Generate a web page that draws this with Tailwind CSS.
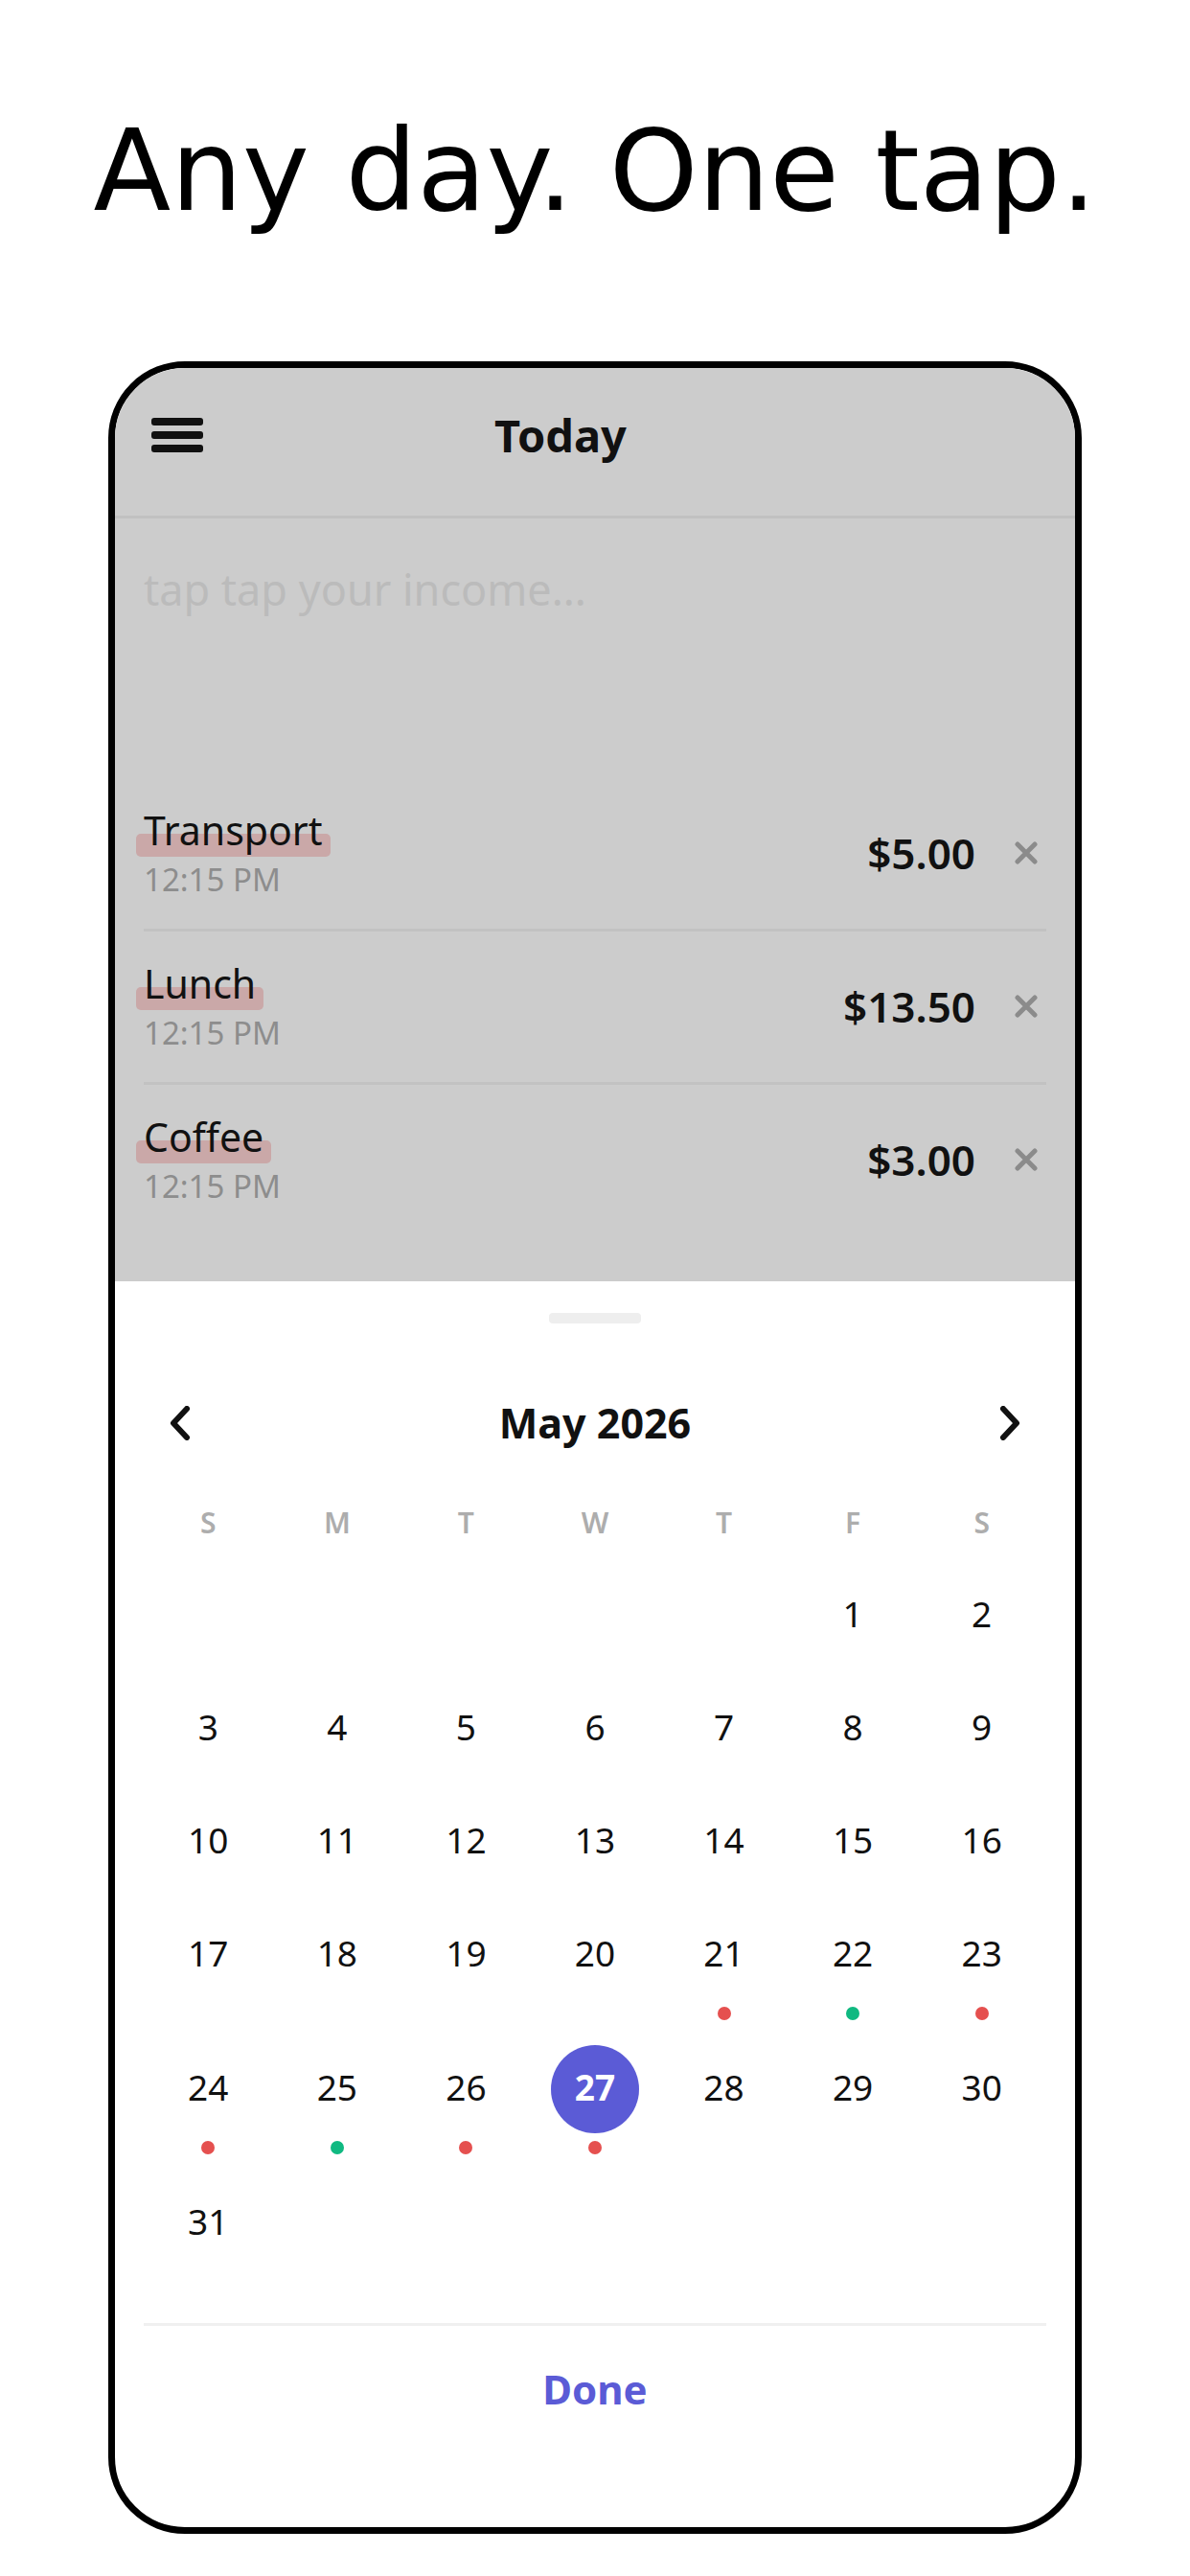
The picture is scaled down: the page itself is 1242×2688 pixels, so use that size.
<!DOCTYPE html>
<html lang="en">
<head>
  <meta charset="UTF-8" />
  <meta name="viewport" content="width=device-width, initial-scale=1.0"/>
  <title>Any day. One tap.</title>
  <script src="https://cdn.jsdelivr.net/npm/@tailwindcss/browser@4"></script>
</head>
<body class="bg-white min-h-screen font-['Noto_Sans','Open_Sans',sans-serif] text-[#111111]">

  <h1 class="pt-[118px] text-center whitespace-nowrap font-['DejaVu_Sans',sans-serif] text-[118px] leading-[120px] text-black">Any day. One tap.</h1>

  <!-- Phone frame -->
  <main class="mx-[113px] mt-[139px] mb-10 overflow-hidden rounded-[80px] border-[7px] border-black bg-white">

    <!-- Dimmed day view -->
    <div class="bg-[#cccccc] pb-[45px]">
      <header class="flex items-center border-b-[3px] border-[#c1c1c1] px-[38px] pt-10 pb-[54px]">
        <button type="button" aria-label="Menu" class="flex h-[60px] w-[54px] items-center">
          <svg class="h-9 w-[54px]" viewBox="0 0 54 36" fill="#111111">
            <rect width="54" height="8" rx="3"/>
            <rect y="14" width="54" height="8" rx="3"/>
            <rect y="28" width="54" height="8" rx="3"/>
          </svg>
        </button>
        <h2 class="flex-1 text-center text-[47px] leading-[60px] font-bold">Today</h2>
        <div class="w-[126px]"></div>
      </header>

      <div class="px-[30px]">
        <input type="text" aria-label="Income" placeholder="tap tap your income..." class="mt-[44px] mb-[167px] block h-[60px] w-full bg-transparent text-[45px] outline-none placeholder:text-[#bbbbbb]" />

        <ul>
          <li class="flex items-center gap-8 border-b-[3px] border-[#c2c2c2] pt-[26px] pb-[27px]">
            <div class="flex-1">
              <div class="relative isolate w-fit text-[41px] leading-[56px]">
                <span class="absolute -inset-x-2 bottom-0 -z-10 h-6 rounded-[5px] bg-[#caa8a8]"></span>Transport
              </div>
              <div class="text-[33px] leading-[48px] text-[#8d8d8d]">12:15 PM</div>
            </div>
            <div class="text-[44px] leading-[56px] font-semibold">$5.00</div>
            <button type="button" aria-label="Delete Transport" class="flex h-[56px] w-[42px] items-center justify-center">
              <svg class="size-6" viewBox="0 0 24 24" fill="none" stroke="#8b8b8b" stroke-width="5" stroke-linecap="round"><path d="M3 3l18 18M21 3L3 21"/></svg>
            </button>
          </li>
          <li class="flex items-center gap-8 border-b-[3px] border-[#c2c2c2] pt-[26px] pb-[27px]">
            <div class="flex-1">
              <div class="relative isolate w-fit text-[41px] leading-[56px]">
                <span class="absolute -inset-x-2 bottom-0 -z-10 h-6 rounded-[5px] bg-[#caa8a8]"></span>Lunch
              </div>
              <div class="text-[33px] leading-[48px] text-[#8d8d8d]">12:15 PM</div>
            </div>
            <div class="text-[44px] leading-[56px] font-semibold">$13.50</div>
            <button type="button" aria-label="Delete Lunch" class="flex h-[56px] w-[42px] items-center justify-center">
              <svg class="size-6" viewBox="0 0 24 24" fill="none" stroke="#8b8b8b" stroke-width="5" stroke-linecap="round"><path d="M3 3l18 18M21 3L3 21"/></svg>
            </button>
          </li>
          <li class="flex items-center gap-8 pt-[26px] pb-[30px]">
            <div class="flex-1">
              <div class="relative isolate w-fit text-[41px] leading-[56px]">
                <span class="absolute -inset-x-2 bottom-0 -z-10 h-6 rounded-[5px] bg-[#caa8a8]"></span>Coffee
              </div>
              <div class="text-[33px] leading-[48px] text-[#8d8d8d]">12:15 PM</div>
            </div>
            <div class="text-[44px] leading-[56px] font-semibold">$3.00</div>
            <button type="button" aria-label="Delete Coffee" class="flex h-[56px] w-[42px] items-center justify-center">
              <svg class="size-6" viewBox="0 0 24 24" fill="none" stroke="#8b8b8b" stroke-width="5" stroke-linecap="round"><path d="M3 3l18 18M21 3L3 21"/></svg>
            </button>
          </li>
        </ul>
      </div>
    </div>

    <!-- Date picker sheet -->
    <section class="px-[30px] pt-[33px] pb-20">
      <div class="mx-auto h-[11px] w-24 rounded bg-[#eeeeee]"></div>

      <div class="mt-[66px] flex h-[76px] items-center justify-between">
        <button type="button" aria-label="Previous month" class="flex size-[76px] items-center justify-center">
          <svg class="h-9 w-[22px]" viewBox="0 0 22 36" fill="none" stroke="#111111" stroke-width="6" stroke-linecap="round" stroke-linejoin="round"><path d="M18 3L4 18l14 15"/></svg>
        </button>
        <h3 class="text-[43px] leading-[56px] font-bold">May 2026</h3>
        <button type="button" aria-label="Next month" class="flex size-[76px] items-center justify-center">
          <svg class="h-9 w-[22px]" viewBox="0 0 22 36" fill="none" stroke="#111111" stroke-width="6" stroke-linecap="round" stroke-linejoin="round"><path d="M4 3l14 15L4 33"/></svg>
        </button>
      </div>

      <table class="mt-7 w-full table-fixed">
        <thead>
          <tr class="h-[76px] text-[30px] leading-10 text-[#adadad]">
            <th class="p-0 font-semibold">S</th>
            <th class="p-0 font-semibold">M</th>
            <th class="p-0 font-semibold">T</th>
            <th class="p-0 font-semibold">W</th>
            <th class="p-0 font-semibold">T</th>
            <th class="p-0 font-semibold">F</th>
            <th class="p-0 font-semibold">S</th>
          </tr>
        </thead>
        <tbody id="days" class="align-top text-[37px] leading-[48px]"></tbody>
      </table>

      <button type="button" class="mt-[45px] block h-[133px] w-full border-t-[3px] border-[#f0f0f0] text-[42px] font-bold text-[#5b5bd6]">Done</button>
    </section>
  </main>

  <script>
    const firstWeekday = 5; // May 1 is a Friday
    const daysInMonth = 31;
    const selected = 27;
    const marks = { 21: "out", 22: "in", 23: "out", 24: "out", 25: "in", 26: "out", 27: "out" };

    const dots = {
      out: '<span class="size-[14px] rounded-full bg-[#e5504f]"></span>',
      in: '<span class="size-[14px] rounded-full bg-[#10b981]"></span>'
    };

    let html = "";
    for (let start = 1 - firstWeekday; start <= daysInMonth; start += 7) {
      html += "<tr>";
      for (let day = start; day < start + 7; day++) {
        if (day < 1 || day > daysInMonth) {
          html += '<td class="p-0"></td>';
          continue;
        }
        const label = day === selected
          ? `<span class="flex size-[92px] items-center justify-center rounded-full bg-[#5b5bd6] pb-1 font-bold text-white">${day}</span>`
          : `<span class="flex size-[92px] items-center justify-center pb-1">${day}</span>`;
        html += `<td class="p-0"><button type="button" class="flex w-full flex-col items-center gap-2 py-[13px]">${label}${dots[marks[day]] || ""}</button></td>`;
      }
      html += "</tr>";
    }
    document.getElementById("days").innerHTML = html;
  </script>
</body>
</html>
